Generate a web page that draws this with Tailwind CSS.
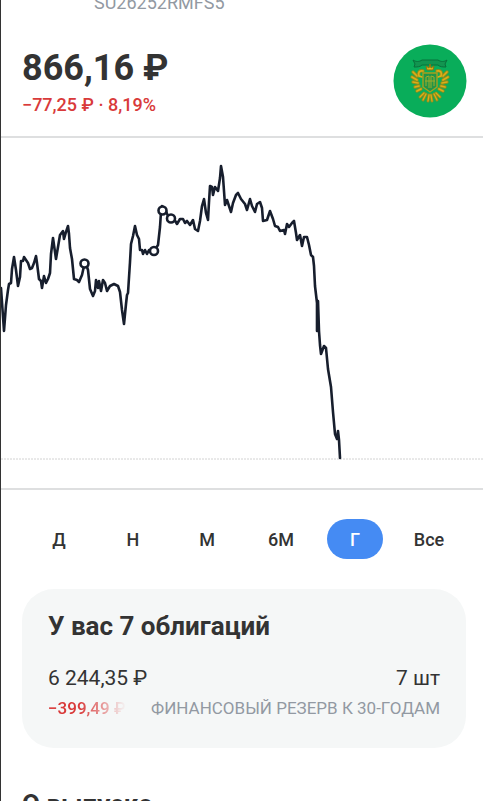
<!DOCTYPE html>
<html lang="ru">
<head>
    <meta charset="UTF-8" />
    <meta name="viewport" content="width=device-width, initial-scale=1.0">
    <title>SU26252RMFS5</title>
    <script src="https://cdn.jsdelivr.net/npm/@tailwindcss/browser@4"></script>
</head>
<body class="h-screen overflow-hidden bg-white border-l border-[#333] font-['Roboto',sans-serif] text-[#333]">

    <!-- Тикер и цена -->
    <header class="-mt-2 pl-[21px] pr-4">
        <p class="pl-[72px] text-[18px] leading-[22px] text-[#9299a2]">SU26252RMFS5</p>
        <div class="mt-[30px] mb-[18px] flex items-center justify-between">
            <div>
                <h1 class="text-[36px] leading-[48px] font-bold">866,16 ₽</h1>
                <p class="text-[18px] leading-[26px] font-medium text-[#d93a3a]">−77,25 ₽ · 8,19%</p>
            </div>
            <!-- Эмблема эмитента -->
            <svg class="size-[74px]" viewBox="0 0 74 74" role="img" aria-label="Минфин России">
                <circle cx="37" cy="37" r="36.5" fill="#09ad5a" />
                <path d="M20 16c3 2 6 2 9 0h16c3 2 6 2 9 0l-2 4 1 3c-3 0-6 0-8-2H29c-2 2-5 2-8 2l1-3z" fill="#129550" stroke="#08703b" stroke-width="1" />
                <!-- крылья -->
                <g fill="none" stroke="#8b8d1c" stroke-width="3.4" stroke-linecap="round">
                    <path d="M30 27c-4-1-5 2-4 5M24 32l-4-4M24 36l-5-3M25 39l-5-1M26 42l-4 1M28 45l-4 2" />
                    <path d="M44 27c4-1 5 2 4 5M50 32l4-4M50 36l5-3M49 39l5-1M48 42l4 1M46 45l4 2" />
                </g>
                <g fill="none" stroke="#dcae18" stroke-width="1.7" stroke-linecap="round">
                    <path d="M30 27c-4-1-5 2-4 5l3 1M24 32l-4-4M24 36l-5-3M25 39l-5-1M26 42l-4 1M28 45l-4 2" />
                    <path d="M44 27c4-1 5 2 4 5l-3 1M50 32l4-4M50 36l5-3M49 39l5-1M48 42l4 1M46 45l4 2" />
                </g>
                <!-- хвост -->
                <path d="M31 49l-4 4M33 50l-3 6M36 51l-1 6M38 51l1 6M41 50l3 6M43 49l4 4" fill="none" stroke="#8b8d1c" stroke-width="3" stroke-linecap="round" />
                <path d="M31 49l-4 4M33 50l-3 6M36 51l-1 6M38 51l1 6M41 50l3 6M43 49l4 4" fill="none" stroke="#dcae18" stroke-width="1.3" stroke-linecap="round" />
                <!-- корона -->
                <path d="M34 26l-1-4 3 2 1-4 1 4 3-2-1 4z" fill="#e2b719" stroke="#8c7410" stroke-width="1" />
                <!-- щит -->
                <path d="M30 29h14v14l-7 5-7-5z" fill="#239447" stroke="#a5a01f" stroke-width="1.4" />
                <path d="M33 33v9M36 32v12M38 32v12M41 33v9M32 37h10M33 33l3-1M38 32l3 1" fill="none" stroke="#9dad2a" stroke-width="1" />
            </svg>
        </div>
    </header>

    <!-- График цены за год -->
    <section class="border-y-2 border-[#dedfe0]">
        <svg class="block w-full" viewBox="1 138 482 350" role="img" aria-label="График цены за год">
            <line x1="1" y1="459" x2="483" y2="459" stroke="#d2d2d2" stroke-width="1" stroke-dasharray="2 1" />
            <polyline fill="none" stroke="#171e2d" stroke-width="2.6" stroke-linejoin="round" stroke-linecap="round"
                points="1,288 4,331 6,305 8,290 9,284 11,283 12,269 14,257 16,270 18,286 20,277 21,261 23,261 24,257 26,260 28,263 30,269 32,268 34,263 36,256 37,263 39,279 41,281 42,288 44,276 46,283 48,279 50,273 51,254 53,238 54,245 56,259 58,247 60,235 63,231 64,239 66,232 68,226 69,234 70,248 72,259 74,279 77,280 79,282 82,275 84,266 87,267 88,270 90,289 93,296 95,291 96,280 98,288 99,281 101,291 103,280 105,283 107,291 110,286 114,284 118,286 120,292 122,310 124,324 126,304 127,295 128,293 130,262 131,244 133,236 135,226 137,235 139,239 140,250 142,250 143,254 145,250 147,254 149,250 154,251 158,245 160,227 161,212 162,206 165,209 168,216 171,218 174,219 177,224 180,219 183,219 185,223 187,221 190,225 193,220 195,229 198,231 200,221 202,206 204,199 206,213 208,220 209,202 210,186 212,187 213,195 215,187 218,191 220,178 221,166 223,177 225,205 227,200 229,206 231,212 233,203 236,195 238,193 241,199 245,204 247,210 250,199 252,206 255,212 257,204 260,202 262,208 263,221 267,220 270,211 273,219 275,226 278,227 280,231 284,230 285,234 287,224 289,227 292,223 294,221 296,233 297,240 300,235 302,246 304,237 307,237 309,245 311,255 313,257 314,266 315,286 317,303 317,331 318,301 319,331 320,345 321,354 324,346 326,348 328,369 331,387 333,412 335,434 337,439 338,431 339,440 340,458" />
            <!-- Сделки -->
            <g fill="#fff" stroke="#171e2d" stroke-width="2.6">
                <circle cx="84.5" cy="263.5" r="4" />
                <circle cx="154" cy="251" r="4" />
                <circle cx="162.5" cy="210.5" r="4" />
                <circle cx="171" cy="218.5" r="4" />
            </g>
        </svg>
    </section>

    <main class="pl-[21px] pr-[17px]">
        <!-- Период -->
        <nav class="mt-[29px] grid grid-cols-6 justify-items-center text-[18px] font-medium">
            <button class="h-10 w-14 rounded-full">Д</button>
            <button class="h-10 w-14 rounded-full">Н</button>
            <button class="h-10 w-14 rounded-full">М</button>
            <button class="h-10 w-14 rounded-full">6М</button>
            <button class="h-10 w-14 rounded-full bg-[#458bf3] text-white" aria-pressed="true">Г</button>
            <button class="h-10 w-14 rounded-full">Все</button>
        </nav>

        <!-- Позиция в портфеле -->
        <section class="mt-[30px] rounded-[32px] bg-[#f5f7f7] px-[26px] pt-[21px] pb-[26px]">
            <h2 class="text-[26px] leading-8 font-bold">У вас 7 облигаций</h2>
            <div class="mt-5 flex justify-between text-[21px] leading-8">
                <span>6 244,35 ₽</span>
                <span>7 шт</span>
            </div>
            <div class="flex justify-between text-[17px] leading-7">
                <span class="whitespace-nowrap font-medium text-[#d93a3a] [mask-image:linear-gradient(to_right,#000_40%,transparent)]">−399,49 ₽</span>
                <span class="whitespace-nowrap text-[#9299a2]">ФИНАНСОВЫЙ РЕЗЕРВ К 30-ГОДАМ</span>
            </div>
        </section>

        <h2 class="mt-10 text-[26px] leading-8 font-bold">О выпуске</h2>
    </main>

</body>
</html>
